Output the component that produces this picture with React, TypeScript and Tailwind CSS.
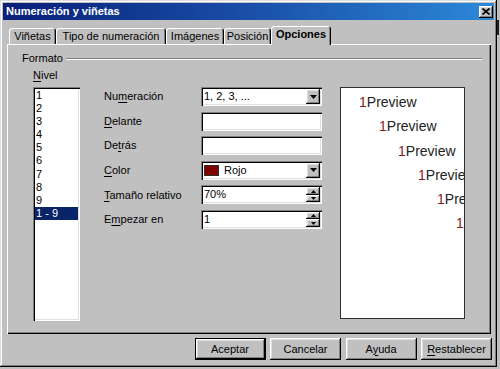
import React from "react";

const RAISED =
  "shadow-[inset_-1px_-1px_0_#000,inset_1px_1px_0_#fff,inset_-2px_-2px_0_#808080,inset_2px_2px_0_#dfdfdf]";
const SUNKEN =
  "shadow-[inset_1px_1px_0_#808080,inset_2px_2px_0_#000,inset_-1px_-1px_0_#fff,inset_-2px_-2px_0_#dfdfdf]";

function U({ children }: { children: React.ReactNode }) {
  return <span className="underline decoration-1 underline-offset-[1.5px]">{children}</span>;
}

function DownArrow() {
  return (
    <svg width="7" height="4" viewBox="0 0 7 4">
      <path d="M0 0h7L3.5 4z" fill="#000" />
    </svg>
  );
}

function DropBtn() {
  return (
    <div className={`w-[14px] h-[15px] flex items-center justify-center bg-[#c0c0c0] ${RAISED}`}>
      <DownArrow />
    </div>
  );
}

function Spin() {
  return (
    <div className="flex flex-col w-[14px] h-[15px]">
      <div className={`h-[7.5px] flex items-center justify-center bg-[#c0c0c0] ${RAISED}`}>
        <svg width="5" height="3" viewBox="0 0 5 3">
          <path d="M2.5 0L5 3H0z" fill="#000" />
        </svg>
      </div>
      <div className={`h-[7.5px] flex items-center justify-center bg-[#c0c0c0] ${RAISED}`}>
        <svg width="5" height="3" viewBox="0 0 5 3">
          <path d="M0 0h5L2.5 3z" fill="#000" />
        </svg>
      </div>
    </div>
  );
}

function Field({ children, right }: { children?: React.ReactNode; right?: React.ReactNode }) {
  return (
    <div className={`w-[121px] h-[19px] bg-white flex items-center pl-[3px] pr-[2px] ${SUNKEN}`}>
      <div className="flex-1 flex items-center leading-none">{children}</div>
      {right}
    </div>
  );
}

function Tab({ label, w, selected }: { label: string; w: string; selected?: boolean }) {
  return (
    <div
      className={`${w} ${
        selected
          ? "h-[19px] -mb-[1px] font-bold relative z-10"
          : "h-[16px]"
      } bg-[#c0c0c0] rounded-t-[3px] flex items-center justify-center shadow-[inset_1px_1px_0_#fff,inset_-1px_0_0_#000,inset_-2px_0_0_#808080]`}
    >
      <span className={selected ? "-mt-[2px]" : ""}>{label}</span>
    </div>
  );
}

function Btn({ children, def }: { children: React.ReactNode; def?: boolean }) {
  return (
    <div
      className={`w-[71px] h-[22px] flex items-center justify-center bg-[#c0c0c0] ${
        def ? "border border-black" : ""
      } ${RAISED}`}
    >
      {children}
    </div>
  );
}

export default function App() {
  const levels = ["1", "2", "3", "4", "5", "6", "7", "8", "9"];
  return (
    <div className="w-[500px] h-[369px] bg-[#c0c0c0] font-['Liberation_Sans',Arial,sans-serif] text-[11px] text-black overflow-hidden relative">
      <div className="absolute left-[497px] top-[20px] w-[2px] h-[15px] bg-[#202020]" />
      <div className="w-[497px] h-[367px] p-[3px] flex flex-col shadow-[inset_-1px_-1px_0_#000,inset_1px_1px_0_#dfdfdf,inset_-2px_-2px_0_#808080,inset_2px_2px_0_#fff]">
        {/* Title bar */}
        <div className="h-[17px] flex items-center justify-between bg-gradient-to-r from-[#0a1f78] via-[#1a4fa8] to-[#2d88d8] pl-[3px] pr-[1px]">
          <span className="text-white font-bold text-[11px] leading-none">Numeración y viñetas</span>
          <div className={`w-[14px] h-[12px] bg-[#c0c0c0] flex items-center justify-center ${RAISED}`}>
            <svg width="8" height="7" viewBox="0 0 8 7">
              <path d="M0.5 0.5L7.5 6.5M7.5 0.5L0.5 6.5" stroke="#000" strokeWidth="1.7" />
            </svg>
          </div>
        </div>

        {/* Tabs */}
        <div className="h-[24px] flex items-end pl-[6px]">
          <Tab label="Viñetas" w="w-[47px]" />
          <Tab label="Tipo de numeración" w="w-[110px]" />
          <Tab label="Imágenes" w="w-[58px]" />
          <Tab label="Posición" w="w-[47px]" />
          <Tab label="Opciones" w="w-[60px]" selected />
        </div>

        {/* Panel */}
        <div className="ml-[4px] w-[484px] h-[290px] pt-[8px] shadow-[inset_1px_1px_0_#fff,inset_-1px_-1px_0_#000,inset_-2px_-2px_0_#808080]">
          <div className="h-[13px] flex items-center pl-[15px] pr-[9px]">
            <span className="leading-none">Formato</span>
            <div className="flex-1 ml-[3px] h-0 border-t border-t-[#808080] border-b border-b-white" />
          </div>
          <div className="mt-[4px] h-[13px] leading-[13px] pl-[26px]">
            <U>N</U>ivel
          </div>
          <div className="mt-[5px] flex items-start pl-[26px]">
            {/* Level list */}
            <div className={`w-[47px] h-[234px] bg-white p-[2px] ${SUNKEN}`}>
              {levels.map((l) => (
                <div key={l} className="h-[13.1px] leading-[13.1px] pl-[1px]">
                  {l}
                </div>
              ))}
              <div className="h-[13.1px] leading-[13.1px] pl-[1px] bg-[#0a246a] text-white">1 - 9</div>
            </div>

            {/* Form */}
            <div className="ml-[24px] flex flex-col gap-[5.6px]">
              <div className="flex items-center">
                <div className="w-[97px]">
                  Nu<U>m</U>eración
                </div>
                <Field right={<DropBtn />}>1, 2, 3, ...</Field>
              </div>
              <div className="flex items-center">
                <div className="w-[97px]">
                  <U>D</U>elante
                </div>
                <Field />
              </div>
              <div className="flex items-center">
                <div className="w-[97px]">
                  De<U>t</U>rás
                </div>
                <Field />
              </div>
              <div className="flex items-center">
                <div className="w-[97px]">
                  <U>C</U>olor
                </div>
                <Field right={<DropBtn />}>
                  <span className="w-[15px] h-[11px] bg-[#800000] border border-[#303030] mr-[5px]" />
                  Rojo
                </Field>
              </div>
              <div className="flex items-center">
                <div className="w-[97px]">
                  <U>T</U>amaño relativo
                </div>
                <Field right={<Spin />}>70%</Field>
              </div>
              <div className="flex items-center">
                <div className="w-[97px]">
                  E<U>m</U>pezar en
                </div>
                <Field right={<Spin />}>1</Field>
              </div>
            </div>

            {/* Preview */}
            <div className="ml-[18px] w-[125px] h-[232px] bg-white border border-[#303030] overflow-hidden pt-[2px] text-[14px] font-['Liberation_Sans',Arial,sans-serif]">
              <div className="h-[24.3px] leading-[24.3px] whitespace-nowrap ml-[18px]">
                <span className="text-[#8a1c1c]">1</span>
                <span className="text-[#222]">Preview</span>
              </div>
              <div className="h-[24.3px] leading-[24.3px] whitespace-nowrap ml-[38px]">
                <span className="text-[#8a1c1c]">1</span>
                <span className="text-[#222]">Preview</span>
              </div>
              <div className="h-[24.3px] leading-[24.3px] whitespace-nowrap ml-[57px]">
                <span className="text-[#8a1c1c]">1</span>
                <span className="text-[#222]">Preview</span>
              </div>
              <div className="h-[24.3px] leading-[24.3px] whitespace-nowrap ml-[77px]">
                <span className="text-[#8a1c1c]">1</span>
                <span className="text-[#222]">Preview</span>
              </div>
              <div className="h-[24.3px] leading-[24.3px] whitespace-nowrap ml-[96px]">
                <span className="text-[#8a1c1c]">1</span>
                <span className="text-[#222]">Preview</span>
              </div>
              <div className="h-[24.3px] leading-[24.3px] whitespace-nowrap ml-[115px]">
                <span className="text-[#8a1c1c]">1</span>
                <span className="text-[#222]">Preview</span>
              </div>
            </div>
          </div>
        </div>

        {/* Buttons */}
        <div className="mt-[4px] flex justify-end gap-[4.5px] pr-[2px]">
          <Btn def>Aceptar</Btn>
          <Btn>Cancelar</Btn>
          <Btn>
            A<U>y</U>uda
          </Btn>
          <Btn>
            <U>R</U>establecer
          </Btn>
        </div>
      </div>
    </div>
  );
}
